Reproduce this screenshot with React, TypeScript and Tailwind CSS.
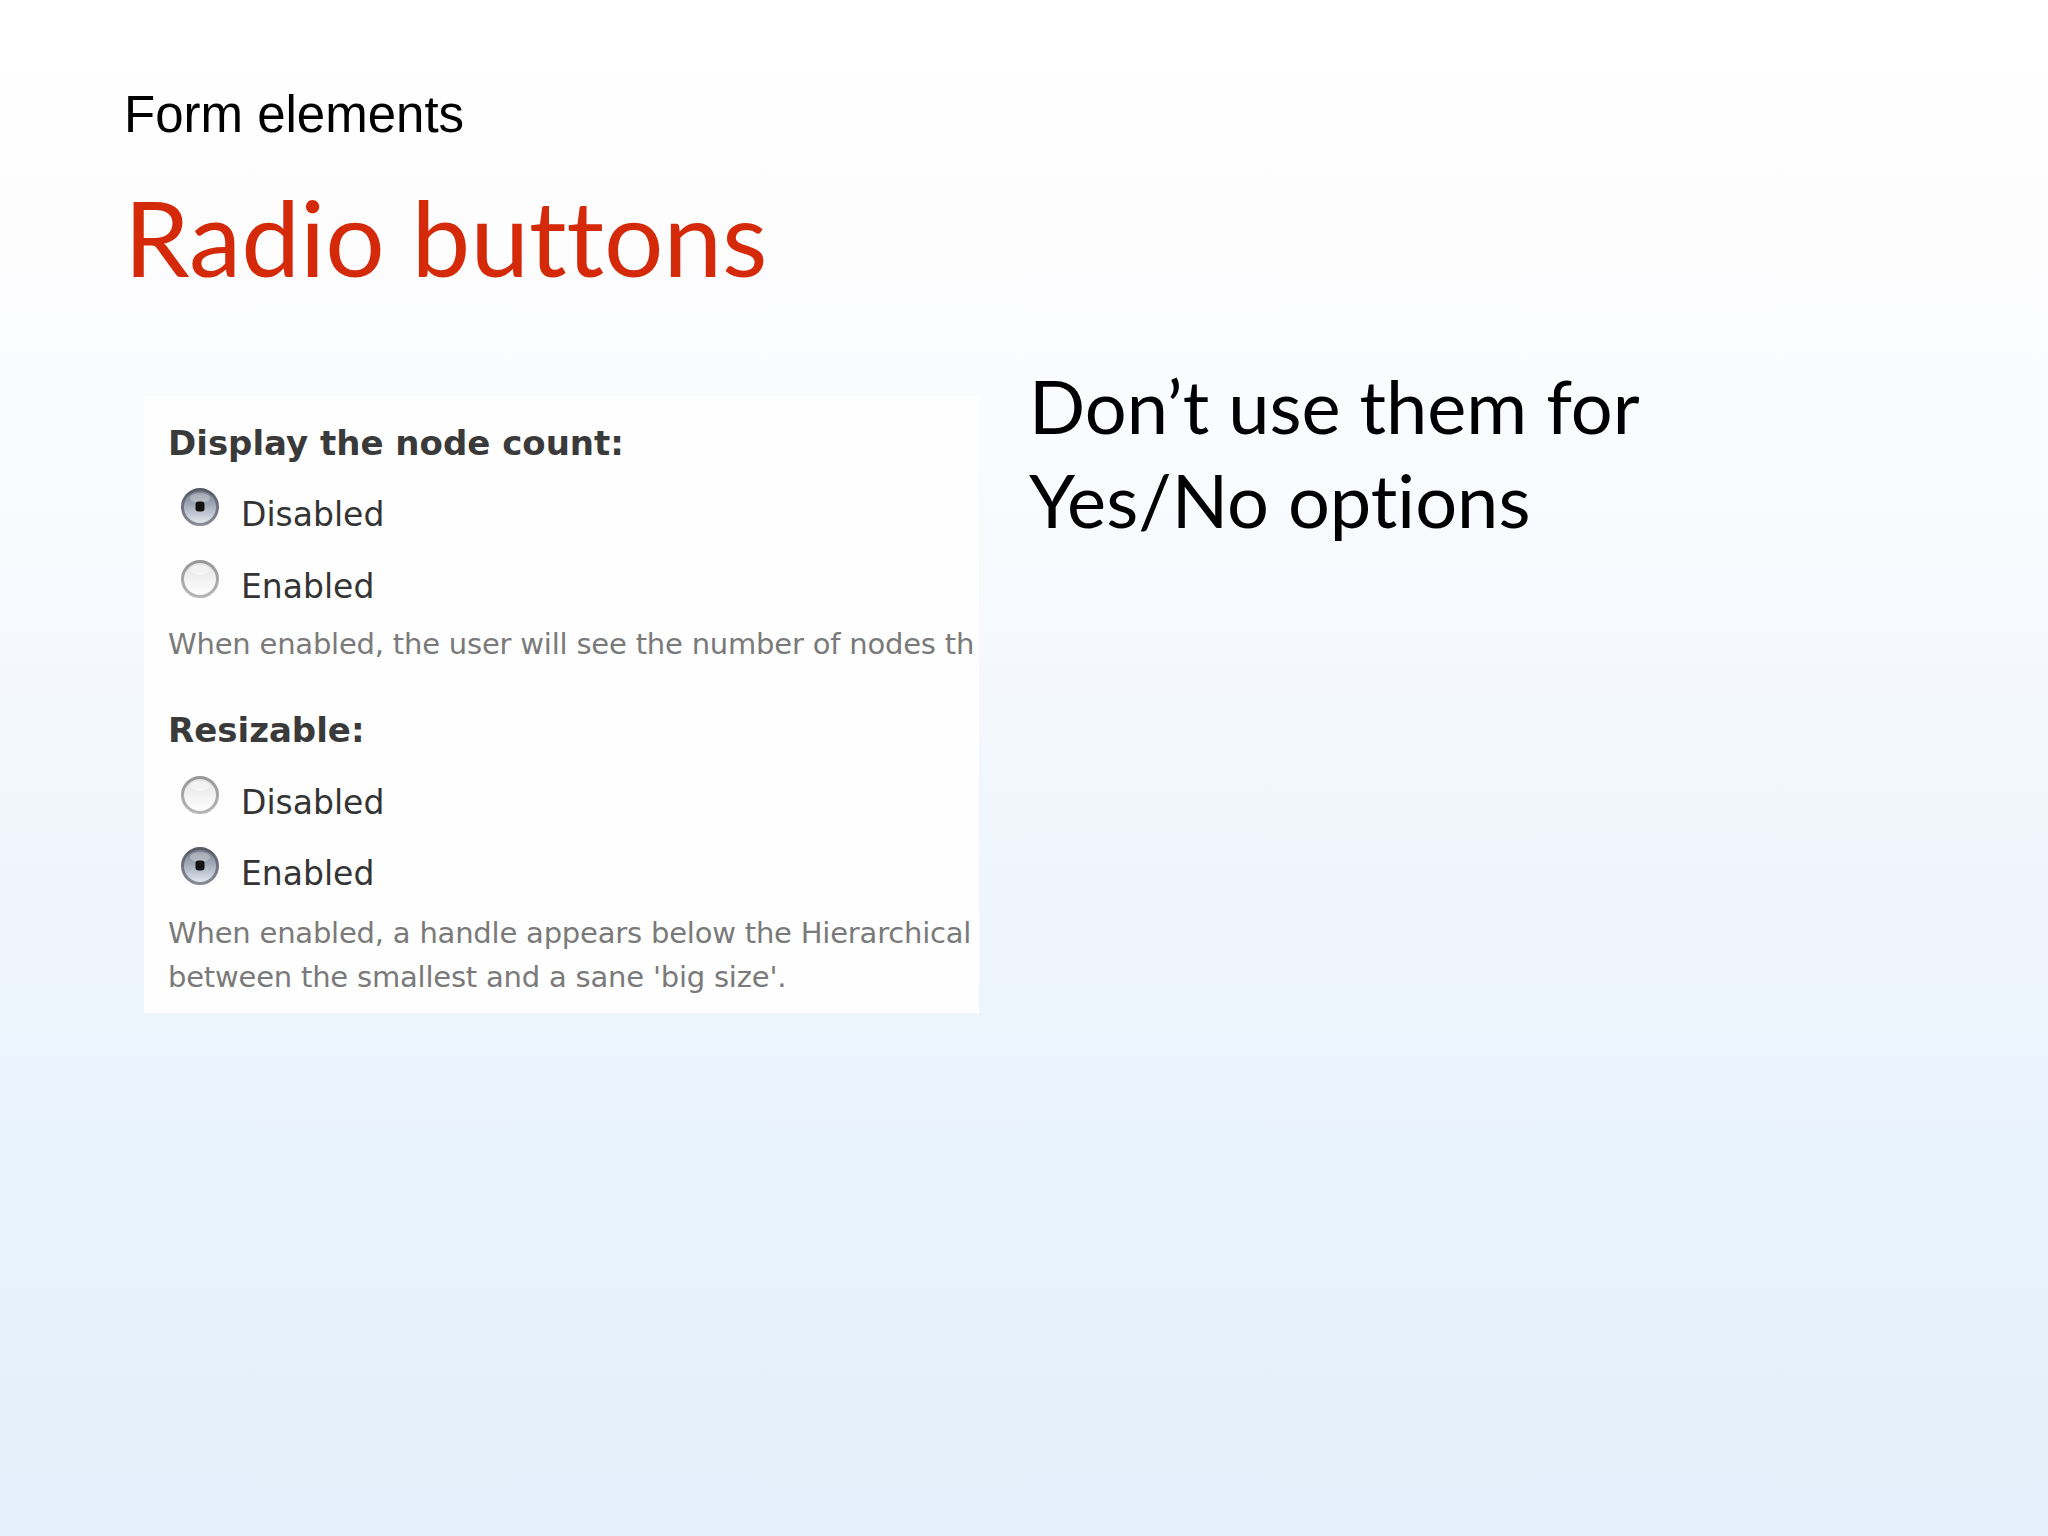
import React from 'react'

function Radio({ checked }: { checked: boolean }) {
    const id = checked ? 'on' : 'off'
    return (
        <svg width="40" height="40" viewBox="0 0 40 40" className="shrink-0 mb-[16px]">
            <defs>
                <linearGradient id={`fill-${id}`} x1="0" y1="0" x2="0" y2="1">
                    {checked ? (
                        <>
                            <stop offset="0%" stopColor="#737a89" />
                            <stop offset="45%" stopColor="#a3abba" />
                            <stop offset="100%" stopColor="#e6ebf2" />
                        </>
                    ) : (
                        <>
                            <stop offset="0%" stopColor="#dedede" />
                            <stop offset="50%" stopColor="#f2f2f2" />
                            <stop offset="100%" stopColor="#ffffff" />
                        </>
                    )}
                </linearGradient>
                <linearGradient id={`ring-${id}`} x1="0" y1="0" x2="0" y2="1">
                    <stop offset="0%" stopColor={checked ? '#575c69' : '#989898'} />
                    <stop offset="100%" stopColor={checked ? '#868b96' : '#b5b5b5'} />
                </linearGradient>
            </defs>
            <circle cx="20" cy="20" r="17.5" fill={`url(#fill-${id})`} stroke={`url(#ring-${id})`} strokeWidth="3" />
            <ellipse cx="20" cy="11" rx="10" ry="5" fill="#ffffff" opacity={checked ? 0.3 : 0.5} />
            {checked && <rect x="15.5" y="14.5" width="9" height="10" rx="3" fill="#111111" />}
        </svg>
    )
}

function Option({ label, checked, mt }: { label: string; checked: boolean; mt: string }) {
    return (
        <div className={`flex items-center gap-[21px] ml-[12px] h-[56px] ${mt}`}>
            <Radio checked={checked} />
            <span className="text-[33px] leading-[56px] text-[#343434] font-['DejaVu_Sans',sans-serif]">{label}</span>
        </div>
    )
}

export default function App() {
    return (
        <div className="w-full min-h-[1536px] bg-[linear-gradient(180deg,#ffffff_0%,#fdfdfe_16%,#f8fafd_34%,#f0f6fd_55%,#e9f3fc_75%,#e3effa_100%)] pl-[124px] pt-[89px]">
            <div className="text-[51px] leading-[51px] text-black font-['Liberation_Sans',Arial,sans-serif]">
                Form elements
            </div>
            <h1 className="mt-[44px] text-[105px] leading-[105px] text-[#d42a0a] font-['Lato',sans-serif] [font-variant-ligatures:none]">
                Radio buttons
            </h1>

            <div className="flex items-start mt-[70px]">
                <div className="mt-[37px] ml-[20px] w-[835px] h-[617px] bg-[#fefefe] pt-[22px] pl-[24px] overflow-hidden">
                    <div className="h-[50px] leading-[50px] text-[34px] font-bold text-[#3a3a3a] font-['DejaVu_Sans',sans-serif]">
                        Display the node count:
                    </div>
                    <Option label="Disabled" checked mt="mt-[19px]" />
                    <Option label="Enabled" checked={false} mt="mt-[16px]" />
                    <div className="mt-[7px] h-[44px] leading-[44px] text-[29px] tracking-[-0.2px] text-[#7a7a7a] whitespace-nowrap font-['DejaVu_Sans',sans-serif]">
                        When enabled, the user will see the number of nodes th
                    </div>

                    <div className="mt-[39px] h-[50px] leading-[50px] text-[34px] font-bold text-[#3a3a3a] font-['DejaVu_Sans',sans-serif]">
                        Resizable:
                    </div>
                    <Option label="Disabled" checked={false} mt="mt-[20px]" />
                    <Option label="Enabled" checked mt="mt-[15px]" />
                    <div className="mt-[9px] leading-[44px] text-[29px] tracking-[-0.2px] text-[#7a7a7a] whitespace-nowrap font-['DejaVu_Sans',sans-serif]">
                        <div>When enabled, a handle appears below the Hierarchical</div>
                        <div>between the smallest and a sane 'big size'.</div>
                    </div>
                </div>

                <p className="ml-[50px] text-[74px] leading-[94px] text-black font-['Lato',sans-serif] [font-variant-ligatures:none]">
                    Don’t use them for
                    <br />
                    Yes/No options
                </p>
            </div>
        </div>
    )
}
